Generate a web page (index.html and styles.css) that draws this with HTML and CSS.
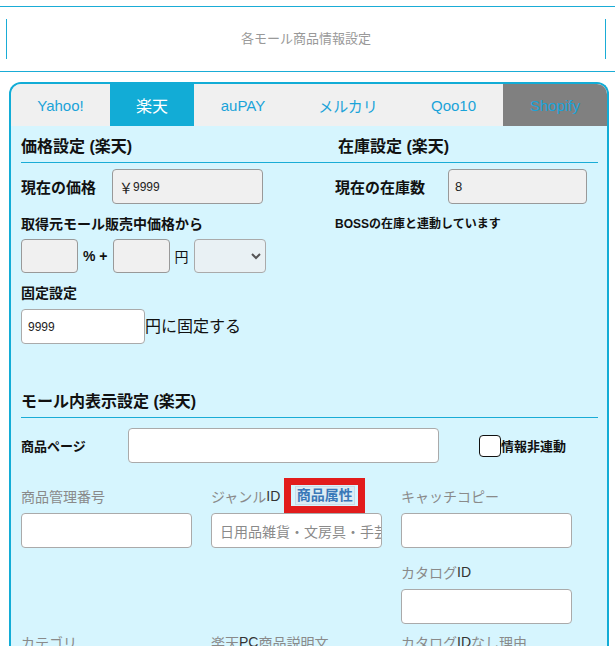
FILE: index.html
```html
<!DOCTYPE html>
<html lang="ja">
<head>
<meta charset="utf-8">
<link rel="stylesheet" href="styles.css">
</head>
<body>
<div class="page-head">
  <div class="head-box">各モール商品情報設定</div>
</div>
<div class="panel">
  <div class="tabs">
    <div class="tab t1">Yahoo!</div>
    <div class="tab t2 active">楽天</div>
    <div class="tab t3">auPAY</div>
    <div class="tab t4">メルカリ</div>
    <div class="tab t5">Qoo10</div>
    <div class="tab t6 gray">Shopify</div>
  </div>
  <div class="body">
    <div class="two-col">
      <div class="col-left">
        <div class="sec-title">価格設定 (楽天)</div>
        <div class="row-price">
          <span class="lbl lbl-big">現在の価格</span>
          <div class="inp gray-inp price-inp"><span class="yen">￥</span>9999</div>
        </div>
        <div class="lbl lbl-src">取得元モール販売中価格から</div>
        <div class="row-calc">
          <div class="inp gray-inp small-inp"></div>
          <span class="calc-txt">% +</span>
          <div class="inp gray-inp small-inp"></div>
          <span class="calc-txt yen-txt">円</span>
          <div class="sel">
            <svg width="12" height="8" viewBox="0 0 12 8"><path d="M2 2l4 4 4-4" fill="none" stroke="#555" stroke-width="2"/></svg>
          </div>
        </div>
        <div class="lbl lbl-fix">固定設定</div>
        <div class="row-fix">
          <div class="inp white-inp fix-inp">9999</div>
          <span class="fix-txt">円に固定する</span>
        </div>
      </div>
      <div class="col-right">
        <div class="sec-title sec-right">在庫設定 (楽天)</div>
        <div class="row-stock">
          <span class="lbl lbl-big">現在の在庫数</span>
          <div class="inp gray-inp stock-inp">8</div>
        </div>
        <div class="note">BOSSの在庫と連動しています</div>
      </div>
    </div>

    <div class="sec-title sec-mall">モール内表示設定 (楽天)</div>
    <div class="row-page">
      <span class="lbl lbl-page">商品ページ</span>
      <div class="inp white-inp page-inp"></div>
      <span class="chk"></span>
      <span class="chk-txt">情報非連動</span>
    </div>
    <div class="grid3">
      <div class="cell">
        <div class="glbl">商品管理番号</div>
        <div class="inp white-inp ginp"></div>
      </div>
      <div class="cell">
        <div class="glbl">ジャンル<span class="dk">ID</span><span class="attr"><span class="attr-in">商品属性</span></span></div>
        <div class="inp white-inp ginp genre">日用品雑貨・文房具・手芸</div>
      </div>
      <div class="cell">
        <div class="glbl">キャッチコピー</div>
        <div class="inp white-inp ginp"></div>
      </div>
      <div class="cell"></div>
      <div class="cell"></div>
      <div class="cell">
        <div class="glbl">カタログ<span class="dk">ID</span></div>
        <div class="inp white-inp ginp"></div>
      </div>
      <div class="cell">
        <div class="glbl">カテゴリ</div>
      </div>
      <div class="cell">
        <div class="glbl">楽天<span class="dk">PC</span>商品説明文</div>
      </div>
      <div class="cell">
        <div class="glbl">カタログ<span class="dk">ID</span>なし理由</div>
      </div>
    </div>
  </div>
</div>
</body>
</html>
```

FILE: styles.css
```css
* { box-sizing: border-box; }
body {
  margin: 0;
  font-family: "Liberation Sans", "Noto Sans CJK JP", sans-serif;
  color: #111;
  background: #fff;
  overflow: hidden;
}
.page-head {
  margin-top: 6px;
  border-top: 1px solid #1aacd6;
  border-bottom: 1px solid #1aacd6;
  padding: 12px 0 12px;
}
.head-box {
  margin: 0 9px 0 6px;
  height: 40px;
  border-left: 1px solid #1aacd6;
  border-right: 1px solid #1aacd6;
  display: flex;
  align-items: center;
  justify-content: center;
  padding-bottom: 3px;
  color: #999;
  font-size: 13px;
}
.panel {
  margin: 10px 6px 0 9px;
  border: 2px solid #12acd6;
  border-bottom: none;
  border-radius: 12px 12px 0 0;
  overflow: hidden;
  height: 600px;
  background: #d6f5fe;
}
.tabs {
  display: flex;
  height: 42px;
  background: #f0f0f0;
}
.tab {
  display: flex;
  align-items: center;
  justify-content: center;
  color: #1aa3d9;
  font-size: 15px;
}
.t1 { width: 99px; }
.t2 { width: 84px; }
.t3 { width: 98px; }
.t4 { width: 112px; }
.t5 { width: 99px; }
.t6 { flex: 1; }
.tab.active { background: #12acd6; color: #fff; font-size: 16px; }
.tab.gray { background: #808080; color: #1aa3d9; }
.body {
  padding: 8px 9px 0 10px;
}
.two-col {
  display: grid;
  grid-template-columns: 314px 1fr;
}
.sec-title {
  font-weight: bold;
  font-size: 16px;
  height: 29px;
  line-height: 26px;
  border-bottom: 1px solid #1aacd6;
}
.sec-right { padding-left: 3px; }
.lbl { font-weight: bold; font-size: 14px; white-space: nowrap; }
.lbl-big { font-size: 15px; flex-shrink: 0; }
.inp {
  border: 1px solid #999;
  border-radius: 4px;
  font-size: 12px;
  display: flex;
  align-items: center;
  padding-left: 6px;
  color: #222;
}
.gray-inp { background: #f0f0f0; }
.white-inp { background: #fff; border-color: #aaa; }
.row-price {
  display: flex;
  align-items: center;
  margin-top: 6px;
}
.price-inp { margin-left: 16px; width: 151px; height: 35px; }
.yen { font-size: 14px; }
.lbl-src { margin-top: 10px; line-height: 20px; }
.row-calc {
  display: flex;
  align-items: center;
  margin-top: 5px;
  height: 34px;
}
.small-inp { width: 57px; height: 34px; }
.calc-txt { font-weight: bold; font-size: 14px; margin: 0 5px 0 5px; }
.yen-txt { font-weight: normal; margin: 0 5px 0 5px; }
.sel {
  width: 72px;
  height: 34px;
  border: 1px solid #aaa;
  border-radius: 4px;
  background: #e9f1f4;
  display: flex;
  align-items: center;
  justify-content: flex-end;
  padding-right: 3px;
}
.lbl-fix { margin-top: 10px; line-height: 20px; }
.row-fix {
  display: flex;
  align-items: center;
  margin-top: 6px;
}
.fix-inp { width: 124px; height: 35px; }
.fix-txt { font-size: 16px; margin-top: -3px; }
.row-stock {
  display: flex;
  align-items: center;
  margin-top: 6px;
}
.stock-inp { margin-left: 23px; width: 139px; height: 35px; font-size: 13px; }
.note {
  margin-top: 10px;
  font-weight: bold;
  font-size: 12px;
}
.sec-mall { margin-top: 45px; }
.row-page {
  display: flex;
  align-items: center;
  margin-top: 10px;
  height: 35px;
}
.lbl-page { font-size: 13px; width: 107px; }
.page-inp { width: 311px; height: 35px; }
.chk {
  width: 22px;
  height: 22px;
  border: 1px solid #111;
  border-radius: 4px;
  background: #fff;
  margin-left: 40px;
}
.chk-txt { font-weight: bold; font-size: 13px; }
.grid3 {
  display: grid;
  grid-template-columns: 171px 171px 171px;
  grid-template-rows: 76px 70px auto;
  column-gap: 19px;
  margin-top: 24px;
}
.glbl {
  color: #8a8a8a;
  font-size: 14px;
  height: 33px;
  display: flex;
  align-items: center;
  margin-top: -8px;
  white-space: nowrap;
}
.dk { color: #333; }
.attr {
  margin-left: 4px;
  border: 7px solid #e21c1c;
  height: 35px;
  width: 81px;
  flex-shrink: 0;
  display: flex;
  align-items: center;
  justify-content: center;
}
.attr-in {
  background: #dcecf4;
  border: 1px solid #c8dde8;
  color: #3a78b8;
  font-weight: bold;
  padding: 0 1px;
  line-height: 17px;
}
.ginp { height: 35px; margin-top: 1px; }
.genre { color: #8a8a8a; font-size: 14px; padding-left: 8px; white-space: nowrap; overflow: hidden; }
```
